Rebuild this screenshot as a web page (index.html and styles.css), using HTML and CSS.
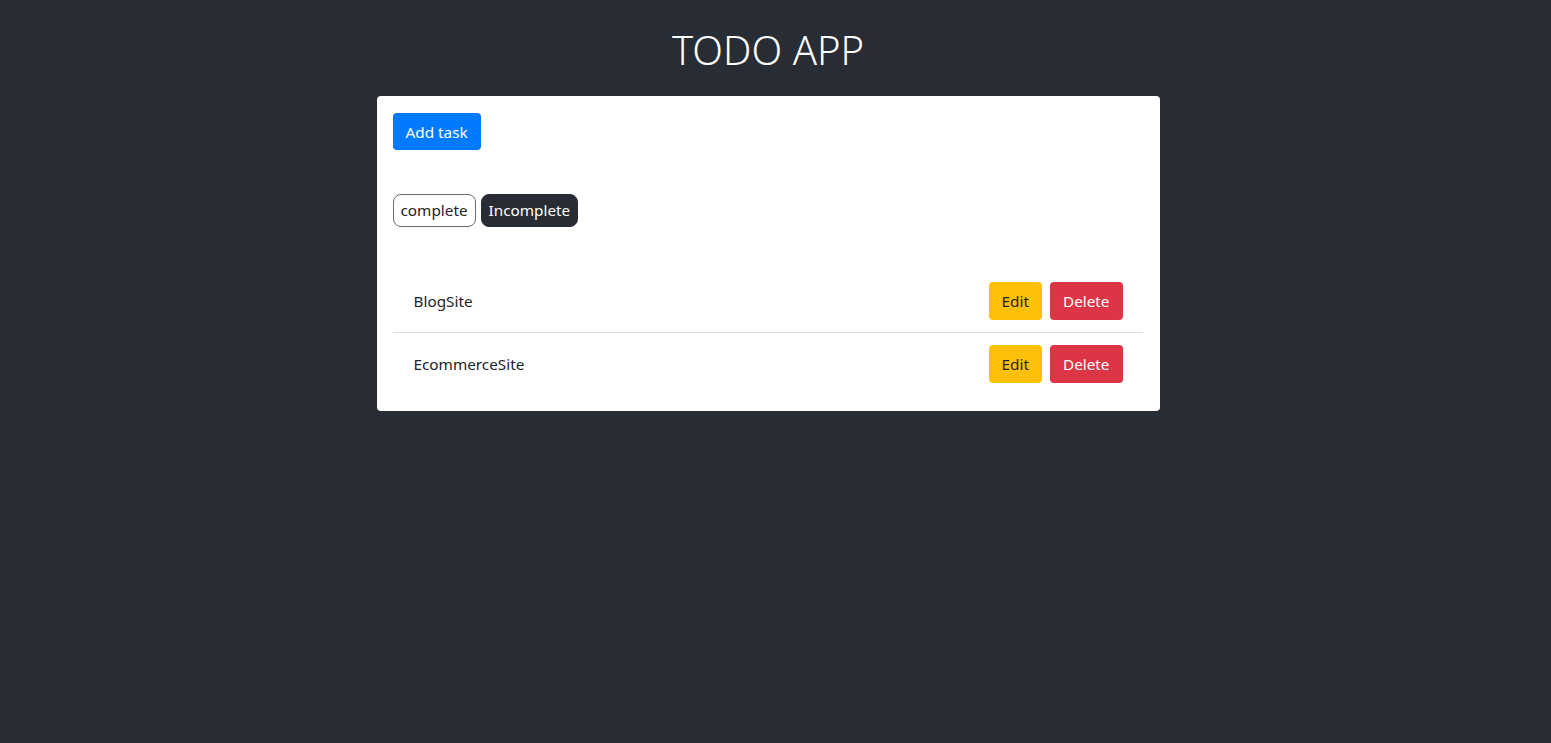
FILE: index.html
```html
<!DOCTYPE html>
<html>
<head>
<meta charset="utf-8">
<link rel="stylesheet" href="styles.css">
</head>
<body>
<div class="app">
  <h1 class="title">TODO APP</h1>
  <div class="card">
    <div class="top"><button class="btn btn-primary">Add task</button></div>
    <div class="filters">
      <button class="pill pill-outline">complete</button>
      <button class="pill pill-dark">Incomplete</button>
    </div>
    <ul class="list">
      <li class="item">
        <span class="name">BlogSite</span>
        <div class="actions"><button class="btn btn-warning">Edit</button><button class="btn btn-danger">Delete</button></div>
      </li>
      <li class="item">
        <span class="name">EcommerceSite</span>
        <div class="actions"><button class="btn btn-warning">Edit</button><button class="btn btn-danger">Delete</button></div>
      </li>
    </ul>
  </div>
</div>
</body>
</html>
```
FILE: styles.css
```css
html, body {
  margin: 0;
  padding: 0;
  background: #282c34;
  height: 100%;
}
body {
  font-family: "Noto Sans", "Open Sans", sans-serif;
  font-size: 15.3px;
  color: #212529;
}
.app {
  width: 1536px;
  display: flex;
  flex-direction: column;
  align-items: center;
}
.title {
  margin: 26px 0 0 0;
  height: 70px;
  font-size: 40px;
  font-weight: 300;
  line-height: 48px;
  color: #fff;
}
.card {
  width: 783px;
  box-sizing: border-box;
  background: #fff;
  border-radius: 4px;
  padding: 17px 17px 16px 16px;
}
.top {
  display: flex;
}
button {
  font-family: inherit;
  font-size: 15.3px;
  cursor: pointer;
}
.btn {
  height: 38px;
  padding: 0 12px;
  border: 1px solid transparent;
  border-radius: 4px;
  line-height: 36px;
}
.btn-primary {
  background: #007bff;
  color: #fff;
  height: 37px;
}
.btn-warning {
  background: #ffc107;
  color: #212529;
}
.btn-danger {
  background: #dc3545;
  color: #fff;
}
.filters {
  display: flex;
  gap: 5px;
  margin-top: 44px;
}
.pill {
  height: 33px;
  padding: 0 7px;
  border-radius: 8px;
  border: 1px solid #6c6c6c;
  line-height: 31px;
}
.pill-outline {
  background: #fff;
  color: #212529;
}
.pill-dark {
  background: #282c34;
  border-color: #282c34;
  color: #fff;
}
.list {
  list-style: none;
  margin: 43px 0 0 0;
  padding: 0;
}
.item {
  display: flex;
  align-items: center;
  justify-content: space-between;
  padding: 12px 20px 12px 21px;
}
.item + .item {
  border-top: 1px solid #dedede;
}
.actions {
  display: flex;
  gap: 8px;
}
```
